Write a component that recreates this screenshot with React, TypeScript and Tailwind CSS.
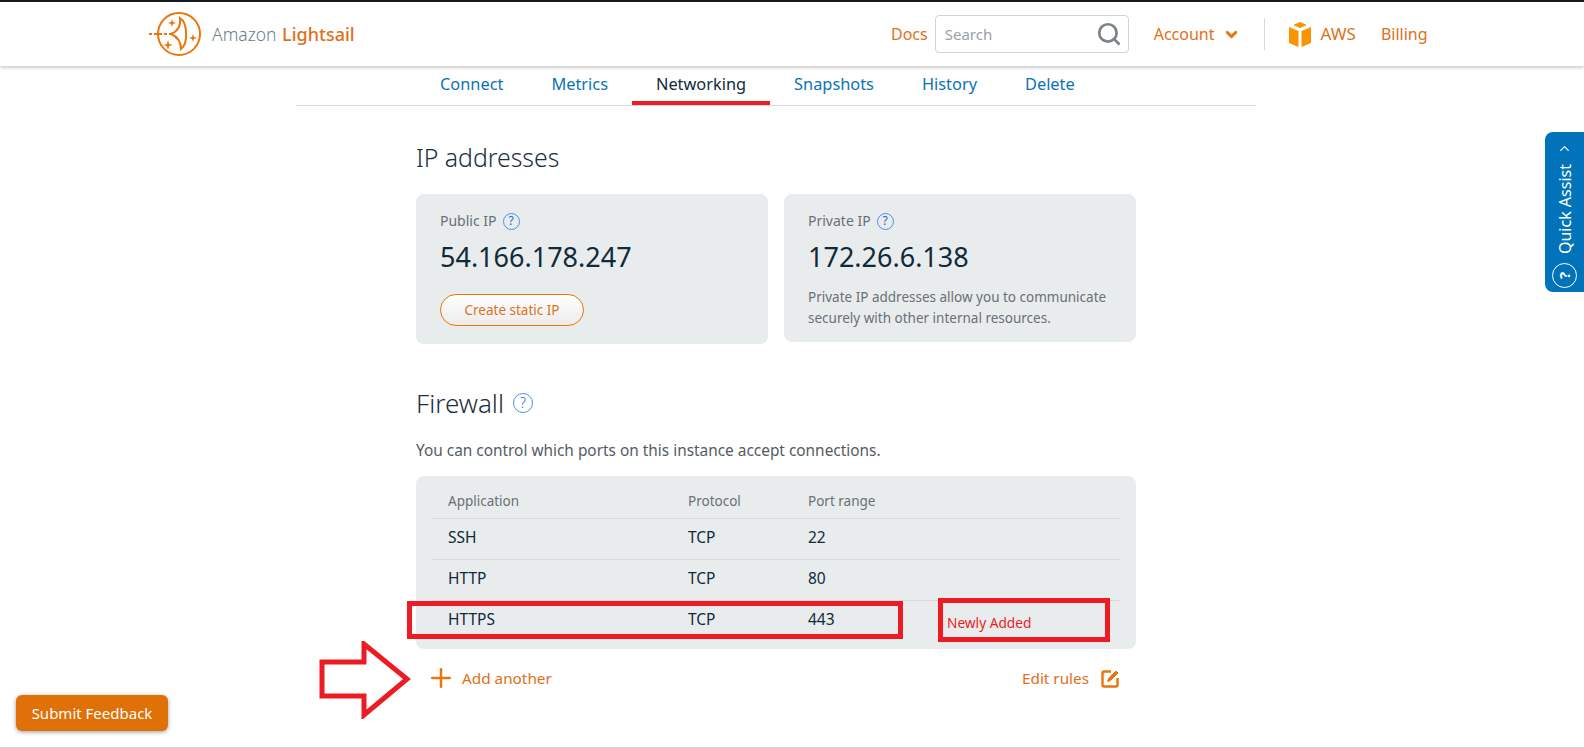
import React from 'react';
import { ChevronDown, ChevronUp, Search, Plus } from 'lucide-react';

const tabs = ['Connect', 'Metrics', 'Networking', 'Snapshots', 'History', 'Delete'];

const rules = [
  { app: 'SSH', protocol: 'TCP', port: '22' },
  { app: 'HTTP', protocol: 'TCP', port: '80' },
  { app: 'HTTPS', protocol: 'TCP', port: '443' },
];

const Help = ({ size = 'small' }: { size?: 'small' | 'large' }) => (
  <span
    className={
      size === 'small'
        ? 'inline-flex h-[17px] w-[17px] items-center justify-center rounded-full border border-[#4d8df0] text-[12px] leading-none text-[#2468d8]'
        : 'inline-flex h-[20px] w-[20px] items-center justify-center rounded-full border-[1.5px] border-[#4d8df0] text-[14px] leading-none text-[#2468d8]'
    }
  >
    ?
  </span>
);

const Logo = () => (
  <svg width="54" height="46" viewBox="0 0 54 46" fill="none" stroke="#e8760c" strokeWidth="2">
    <circle cx="30" cy="23" r="21" />
    <path d="M0 23 H22" strokeDasharray="3 2" />
    <path d="M31 7 C39 12 39 33 32 38 C32 31 29 26 22 23 C29 20 32 14 31 7 Z" />
    <path d="M23 8 L24 11 L27 12 L24 13 L23 16 L22 13 L19 12 L22 11 Z" fill="#e8760c" stroke="none" />
    <path d="M19 29 L20.2 33 L24 34 L20.2 35 L19 39 L17.8 35 L14 34 L17.8 33 Z" fill="#e8760c" stroke="none" />
    <path d="M44 23 L45 26 L48 27 L45 28 L44 31 L43 28 L40 27 L43 26 Z" fill="#e8760c" stroke="none" />
  </svg>
);

const AwsBox = () => (
  <svg width="24" height="25" viewBox="0 0 24 25">
    <path d="M12 0 L19 3 L12 6 L5 3 Z" fill="#f79400" />
    <path d="M1 5 L10.5 9 V25 L1 21 Z" fill="#f79400" />
    <path d="M23 5 L13.5 9 V25 L23 21 Z" fill="#f79400" />
  </svg>
);

const Arrow = () => (
  <svg width="92" height="78" viewBox="0 0 92 78" fill="none" stroke="#ed1c24" strokeWidth="5">
    <path d="M3 21 H45 V3 L88 38 L45 74 V55 H3 Z" strokeLinejoin="miter" />
  </svg>
);

const EditIcon = () => (
  <svg width="19" height="19" viewBox="0 0 19 19" fill="none" stroke="#e8760c" strokeWidth="2.4">
    <path d="M10 2.5 H3 A1.5 1.5 0 0 0 1.5 4 V16 A1.5 1.5 0 0 0 3 17.5 H15 A1.5 1.5 0 0 0 16.5 16 V9" />
    <path d="M6.5 12.5 L7.5 9.5 L15 2 L17 4 L9.5 11.5 Z" fill="#e8760c" strokeWidth="1" />
  </svg>
);

export default function App() {
  return (
    <div className="relative h-[748px] w-[1584px] overflow-hidden border-b border-[#d5d5d5] bg-white font-['Noto_Sans',sans-serif] text-[#102a3a]">
      <header className="flex h-[66px] items-center border-t-2 border-[#16191f] bg-white pl-[149px] shadow-[0_2px_3px_rgba(0,0,0,0.2)]">
        <Logo />
        <span className="ml-[9px] w-[146px] whitespace-nowrap text-[17.5px] font-light text-[#6b7d8c]">
          Amazon <span className="ml-[1px] text-[18px] font-medium text-[#e0701a]">Lightsail</span>
        </span>
        <div className="ml-[533px] flex items-center text-[16px] text-[#e0701a]">
          <span>Docs</span>
          <div className="ml-[7px] flex h-[38px] w-[194px] items-center justify-between rounded-[4px] border border-[#cfd4d8] pl-[9px] pr-[6px]">
            <span className="text-[15px] text-[#98a0a6]">Search</span>
            <Search className="h-[26px] w-[26px] text-[#7b8487]" strokeWidth={2.5} />
          </div>
          <span className="ml-[25px]">Account</span>
          <ChevronDown className="ml-[8px] h-[17px] w-[17px] text-[#e8760c]" strokeWidth={4} />
          <div className="ml-[24px] h-[32px] w-px bg-[#d8dcdf]" />
          <div className="ml-[23px]">
            <AwsBox />
          </div>
          <span className="ml-[9px] text-[17px]">AWS</span>
          <span className="ml-[25px]">Billing</span>
        </div>
      </header>

      <nav className="ml-[296px] flex h-[40px] w-[960px] gap-[48px] border-b border-[#d5dbdb] pl-[144px] text-[16.35px] text-[#0a73b7]">
        {tabs.map((tab) => (
          <div
            key={tab}
            className={
              tab === 'Networking'
                ? 'mx-[-24px] flex items-center border-b-4 border-[#ed1c24] px-[24px] pb-[3px] pt-[5px] text-[#102a3a]'
                : 'flex items-center pb-[3px] pt-[1px]'
            }
          >
            {tab}
          </div>
        ))}
      </nav>

      <main className="ml-[416px] w-[720px]">
        <h2 className="mt-[33px] text-[24.8px] font-light leading-[36px] text-[#1d2f3d]">IP addresses</h2>

        <div className="mt-[19px] flex items-start gap-[16px]">
          <div className="h-[150px] w-[352px] rounded-[8px] bg-[#e9ecec] pl-[24px] pt-[17px]">
            <div className="flex items-center gap-[6px] text-[14px] leading-[20px] text-[#687078]">
              Public IP <Help />
            </div>
            <div className="mt-[7px] text-[27px] leading-[38px]">54.166.178.247</div>
            <button className="mt-[18px] h-[32px] w-[144px] rounded-full border border-[#e8760c] bg-gradient-to-b from-white to-[#ececec] text-[13.5px] text-[#e0701a]">
              Create static IP
            </button>
          </div>
          <div className="h-[148px] w-[352px] rounded-[8px] bg-[#e9ecec] pl-[24px] pt-[17px]">
            <div className="flex items-center gap-[6px] text-[14px] leading-[20px] text-[#687078]">
              Private IP <Help />
            </div>
            <div className="mt-[7px] text-[27px] leading-[38px]">172.26.6.138</div>
            <p className="mt-[11px] w-[320px] text-[13.5px] leading-[21px] text-[#687078]">
              Private IP addresses allow you to communicate securely with other internal resources.
            </p>
          </div>
        </div>

        <h2 className="mt-[41px] flex items-center gap-[9px] text-[26px] font-light leading-[36px] text-[#1d2f3d]">
          Firewall <Help size="large" />
        </h2>
        <p className="mt-[20px] text-[15.4px] leading-[20px] text-[#545b64]">
          You can control which ports on this instance accept connections.
        </p>

        <div className="mt-[15px] h-[173px] rounded-[8px] bg-[#e9ecec] px-[16px] pt-[15px] text-[15.5px]">
          <div className="grid h-[28px] grid-cols-[240px_120px_1fr] border-b border-[#d5dbdb] pl-[16px] text-[13.5px] leading-[20px] text-[#687078]">
            <span>Application</span>
            <span>Protocol</span>
            <span>Port range</span>
          </div>
          {rules.map((rule, i) => (
            <div
              key={rule.app}
              className={
                i < rules.length - 1
                  ? 'grid h-[41px] grid-cols-[240px_120px_1fr] items-center border-b border-[#d5dbdb] pb-[2px] pl-[16px]'
                  : 'grid h-[41px] grid-cols-[240px_120px_1fr] items-center pb-[3px] pl-[16px]'
              }
            >
              <span>{rule.app}</span>
              <span>{rule.protocol}</span>
              <span>{rule.port}</span>
            </div>
          ))}
        </div>

        <div className="mt-[14px] flex h-[30px] items-center justify-between pl-[10px] pr-[16px] text-[15.3px] text-[#e0701a]">
          <div className="flex items-center gap-[6px]">
            <Plus className="h-[30px] w-[30px] text-[#e8760c]" strokeWidth={2} />
            <span>Add another</span>
          </div>
          <div className="flex items-center gap-[12px]">
            <span>Edit rules</span>
            <EditIcon />
          </div>
        </div>
      </main>

      {/* annotations drawn over the screenshot */}
      <div className="absolute left-[407px] top-[601px] h-[38px] w-[496px] border-[5px] border-[#ed1c24]" />
      <div className="absolute left-[938px] top-[598px] flex h-[44px] w-[172px] items-center border-[5px] border-[#ed1c24] pl-[4px] pt-[6px] text-[13.7px] text-[#ed1c24]">
        Newly Added
      </div>
      <div className="absolute left-[319px] top-[641px]">
        <Arrow />
      </div>

      <div className="absolute left-[1545px] top-[132px] flex h-[160px] w-[39px] flex-col items-center justify-between rounded-l-[8px] bg-[#0073bb] pb-[4px] pt-[9px] text-white">
        <ChevronUp className="h-[15px] w-[15px]" strokeWidth={2} />
        <span className="rotate-180 text-[16px] leading-[20px] [writing-mode:vertical-rl]">Quick Assist</span>
        <span className="flex h-[25px] w-[25px] -rotate-90 items-center justify-center rounded-full border border-white text-[15px] font-bold leading-none">
          ?
        </span>
      </div>

      <button className="absolute left-[16px] top-[695px] h-[36px] w-[152px] rounded-[6px] bg-[#e07008] text-[15px] text-white shadow-[0_1px_4px_rgba(0,0,0,0.4)]">
        Submit Feedback
      </button>
    </div>
  );
}
